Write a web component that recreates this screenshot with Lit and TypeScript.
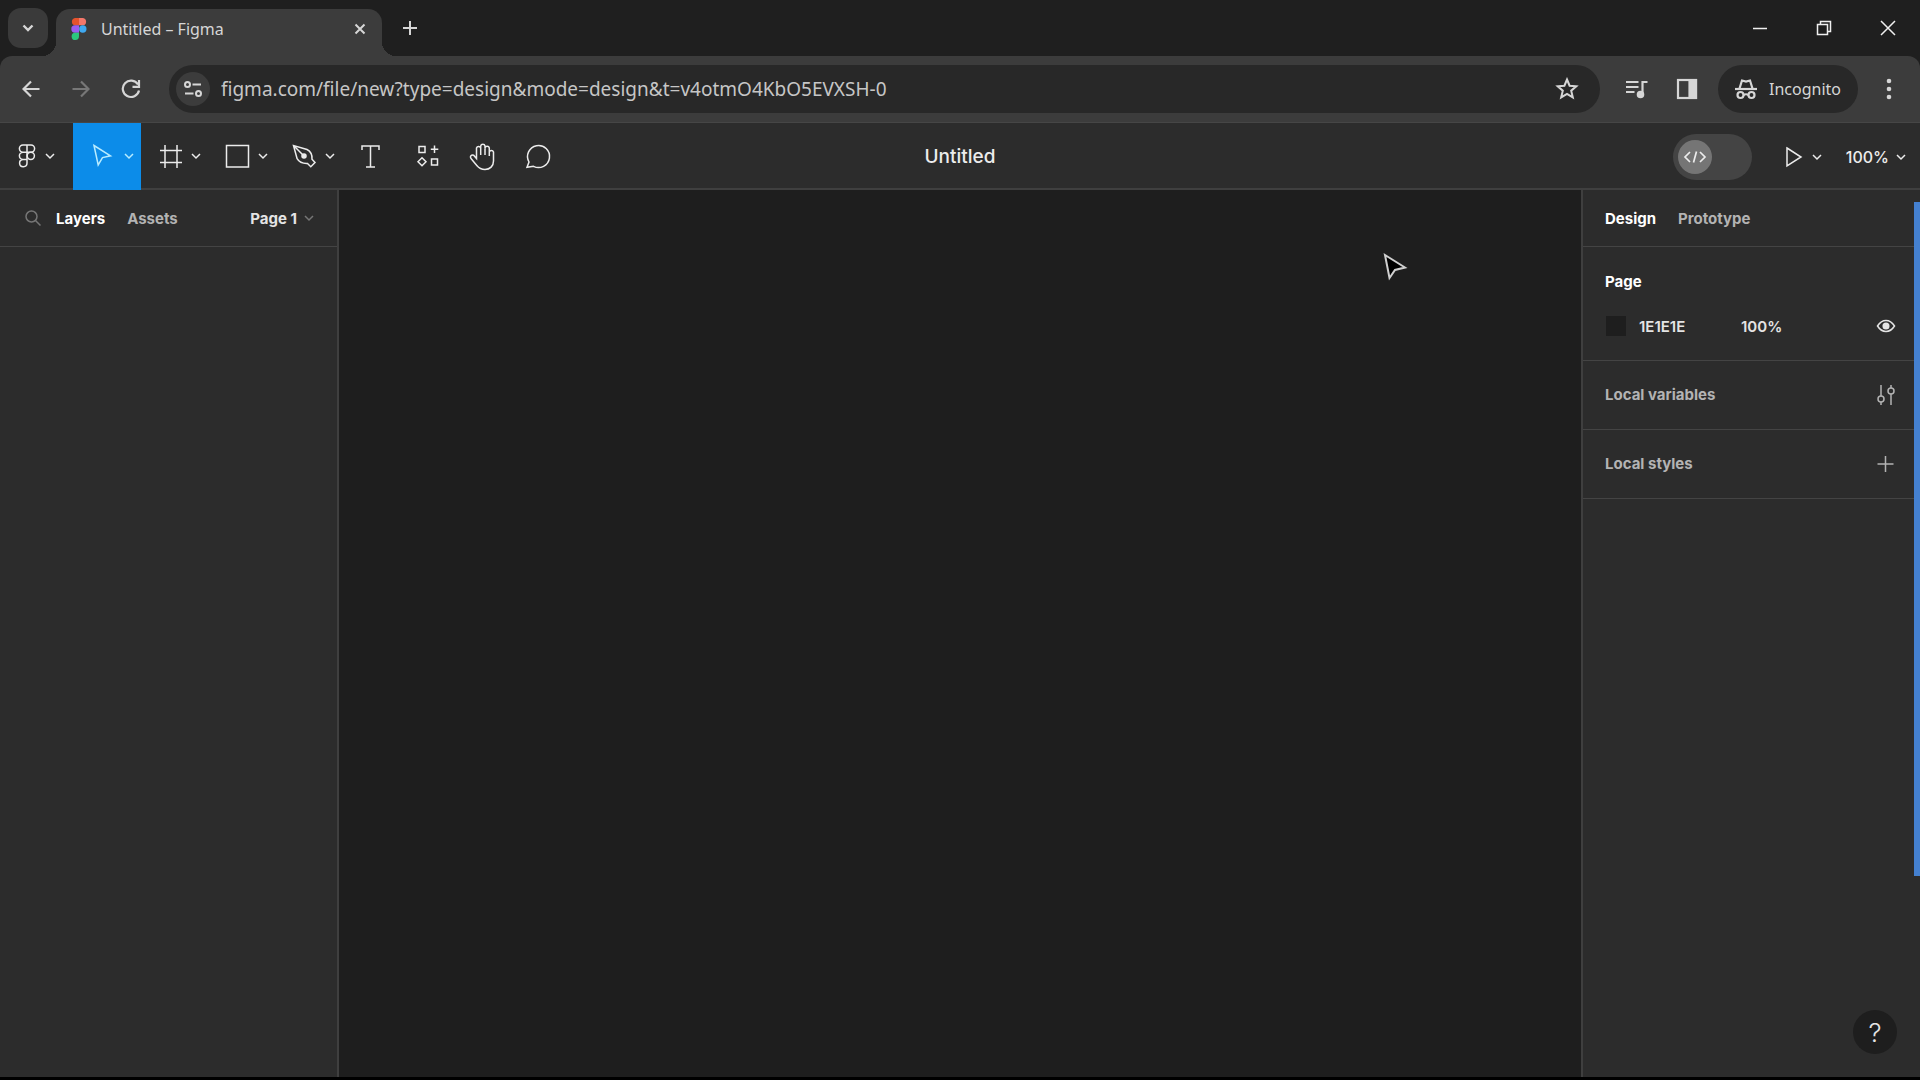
import { LitElement, html, svg, css } from "lit";
import { customElement } from "lit/decorators.js";

const shared = css`
  * {
    box-sizing: border-box;
  }
  button,
  input {
    margin: 0;
    padding: 0;
    border: 0;
    background: none;
    color: inherit;
    font: inherit;
    outline: none;
  }
  button {
    display: flex;
    align-items: center;
    justify-content: center;
    white-space: nowrap;
  }
  svg {
    display: block;
    flex: none;
    fill: none;
    stroke: currentColor;
  }
`;

const icon = (w: number, h: number, body: unknown, sw = 1.5) =>
  html`<svg width=${w} height=${h} viewBox="0 0 ${w} ${h}" stroke-width=${sw} aria-hidden="true">${body}</svg>`;

const chevron = () => icon(10, 8, svg`<path d="M1 2l4 4 4-4"/>`);

const figmaOutline = icon(18, 26, svg`
  <path d="M9 2H5a3.6 3.6 0 0 0 0 7.2h4zM9 2h4a3.6 3.6 0 0 1 0 7.2H9zM9 9.200H5a3.600 3.600 0 0 0 0 7.200h4zM5 16.400a3.700 3.700 0 1 0 4 3.700v-3.700z"/>
  <circle cx="12.800" cy="12.800" r="3.600"/>`);

const tools = {
  move: svg`<path d="M7 5.500l16.500 10.300-8 1.800-4.300 7.300z"/>`,
  frame: svg`<path d="M11 5v23M23 5v23M6 10.500h22M6 22.500h22"/>`,
  rect: svg`<rect x="5.500" y="5.500" width="22" height="21.500"/>`,
  pen: svg`<path d="M5.500 5.500l3.600 13.200c2 3.400 6 5 10.400 4.800l3.300 3.300 4.200-4.200-3-3.300c.4-4.500-1.600-8-5-9.800zM5.500 5.500l9.500 9.500"/><circle cx="16" cy="16" r="2" fill="currentColor"/>`,
  text: svg`<path d="M8 10V6h17v4M16.500 6v21M12 27h9"/>`,
  resources: svg`<path d="M9 6.500h6v6H9zM21.500 19h6v6h-6zM24.500 5.500v7.500M20.800 9.300h7.500M12 17.800l4 4-4 4-4-4z"/>`,
  hand: svg`<path d="M10.500 18.500V8a2.200 2.200 0 0 1 4.200 0V6a2.200 2.200 0 0 1 4.300 0v2a2.200 2.200 0 0 1 4.300 0v4a2.200 2.200 0 0 1 4.200 0v9c0 5-3.500 8.500-8.500 8.500-3.600 0-6-1.300-8.200-4l-5.800-7c-1.600-2 .5-4.300 2.600-3.300zM14.700 7.500V15M19 7.500V15M23.300 9v7"/>`,
  comment: svg`<path d="M5 27.300l2-5.300a11 11 0 1 1 4.500 4.300z"/>`,
};

@customElement("browser-chrome")
export class BrowserChrome extends LitElement {
  static styles = [
    shared,
    css`
      :host {
        display: block;
        background: #1f1f1f;
        color: #d6d6d6;
        font-family: "Noto Sans", "Open Sans", sans-serif;
        font-size: 16px;
      }
      .strip {
        display: flex;
        align-items: center;
        height: 56px;
        padding-left: 8px;
      }
      .search-tabs {
        width: 40px;
        height: 40px;
        border-radius: 13px;
        background: #3a3a3a;
      }
      .tab {
        position: relative;
        align-self: flex-end;
        display: flex;
        align-items: center;
        width: 326px;
        height: 47px;
        margin-left: 8px;
        padding: 0 16px 8px 15px;
        border-radius: 14px 14px 0 0;
        background: #3c3c3c;
      }
      .tab::before,
      .tab::after {
        content: "";
        position: absolute;
        bottom: 0;
        width: 14px;
        height: 14px;
      }
      .tab::before {
        right: 100%;
        background: radial-gradient(circle at 0 0, transparent 14px, #3c3c3c 14px);
      }
      .tab::after {
        left: 100%;
        background: radial-gradient(circle at 100% 0, transparent 14px, #3c3c3c 14px);
      }
      .logo {
        stroke: none;
      }
      .tab-title {
        flex: 1;
        margin-left: 14px;
        line-height: 24px;
      }
      .new-tab {
        width: 40px;
        height: 40px;
        margin-left: 8px;
      }
      .window {
        display: flex;
        margin-left: auto;
        color: #f0f0f0;
      }
      .window button {
        width: 64px;
        height: 48px;
      }
      .bar {
        display: flex;
        align-items: center;
        height: 67px;
        padding: 0 8px;
        border-bottom: 1px solid #464646;
        border-radius: 12px 12px 0 0;
        background: #3c3c3c;
      }
      .nav {
        width: 46px;
        height: 46px;
      }
      .nav + .nav {
        margin-left: 4px;
      }
      .off {
        color: #777777;
      }
      .address {
        flex: 1;
        display: flex;
        align-items: center;
        height: 48px;
        margin: 0 12px 0 15px;
        padding: 0 21px 0 7px;
        border-radius: 24px;
        background: #282828;
      }
      .site {
        width: 34px;
        height: 34px;
        border-radius: 50%;
        background: #3c3c3c;
      }
      .url {
        flex: 1;
        min-width: 0;
        height: 40px;
        margin-left: 11px;
        color: #c6c6c6;
        font-size: 19px;
      }
      .action {
        width: 50px;
        height: 46px;
      }
      .incognito {
        width: 140px;
        height: 48px;
        gap: 12px;
        margin-left: 6px;
        border-radius: 24px;
        background: #282828;
      }
      .more {
        width: 46px;
        height: 46px;
        margin-left: 8px;
      }
      .dots {
        fill: currentColor;
        stroke: none;
      }
    `,
  ];

  render() {
    return html`
      <div class="strip">
        <button class="search-tabs" aria-label="Search tabs">${icon(12, 10, svg`<path d="M1.500 2.500l4.500 4.500 4.500-4.500"/>`, 2.4)}</button>
        <div class="tab">
          <svg class="logo" width="16" height="24" viewBox="0 0 16 24" aria-hidden="true">
            <path fill="#e5532d" d="M8 1H4a3.700 3.700 0 0 0 0 7.300h4z" />
            <path fill="#f2776a" d="M8 1h4a3.700 3.700 0 0 1 0 7.300H8z" />
            <path fill="#9a5cf0" d="M8 8.300H4a3.700 3.700 0 0 0 0 7.400h4z" />
            <circle fill="#3fa9f0" cx="11.800" cy="12" r="3.700" />
            <path fill="#2bc77d" d="M8 15.700H4.200A3.700 3.700 0 1 0 8 19.300z" />
          </svg>
          <span class="tab-title">Untitled – Figma</span>
          <button aria-label="Close tab">${icon(12, 12, svg`<path d="M1.500 1.500l9 9M10.500 1.500l-9 9"/>`, 2)}</button>
        </div>
        <button class="new-tab" aria-label="New tab">${icon(16, 16, svg`<path d="M8 1v14M1 8h14"/>`, 2)}</button>
        <div class="window">
          <button aria-label="Minimize">${icon(16, 16, svg`<path d="M1 8.500h14"/>`, 1.5)}</button>
          <button aria-label="Restore">${icon(16, 16, svg`<path d="M1.500 4.500h10v10h-10zM4.500 4.500v-3h10v10h-3"/>`, 1.5)}</button>
          <button aria-label="Close">${icon(16, 16, svg`<path d="M1 1l14 14M15 1L1 15"/>`, 1.5)}</button>
        </div>
      </div>
      <div class="bar">
        <button class="nav" aria-label="Back">${icon(18, 18, svg`<path d="M17.500 9H2M9 1.500L1.500 9 9 16.500"/>`, 2.2)}</button>
        <button class="nav off" aria-label="Forward">${icon(18, 18, svg`<path d="M.5 9H16M9 1.500L16.500 9 9 16.500"/>`, 2.2)}</button>
        <button class="nav" aria-label="Reload">${icon(20, 20, svg`<path d="M17 5.500A8.200 8.200 0 1 0 18 11.500M18 1v6.800h-6.500"/>`, 2.2)}</button>
        <div class="address">
          <button class="site" aria-label="View site information">
            ${icon(20, 18, svg`<circle cx="4.500" cy="4.500" r="2.500"/><path d="M9.500 4.500H18M2 13.500h8.500"/><circle cx="15.500" cy="13.500" r="2.500"/>`, 2)}
          </button>
          <input class="url" type="text" aria-label="Address" value="figma.com/file/new?type=design&amp;mode=design&amp;t=v4otmO4KbO5EVXSH-0" />
          <button aria-label="Bookmark this tab">
            ${icon(24, 24, svg`<path d="M12 2.500l2.600 6.200 6.700.6-5.100 4.400 1.600 6.600-5.800-3.500-5.800 3.500 1.600-6.600-5.100-4.400 6.700-.6z"/>`, 2)}
          </button>
        </div>
        <button class="action" aria-label="Media control">
          ${icon(24, 20, svg`<path d="M1 3h12.500M1 8h12.500M1 13h8.500M17.500 16V3h5"/><circle cx="15.500" cy="15.500" r="2.700" fill="currentColor"/>`, 2.2)}
        </button>
        <button class="action" aria-label="Side panel">
          ${icon(22, 22, svg`<rect x="2" y="2" width="18" height="18"/><path fill="currentColor" d="M13.500 2H20v18h-6.500z"/>`, 2.2)}
        </button>
        <button class="incognito">
          ${icon(22, 22, svg`<path d="M0 11h22"/><path d="M4.500 10.500L7 2.500l4 1 4-1 2.500 8"/><circle cx="5.500" cy="17" r="3"/><circle cx="16.500" cy="17" r="3"/><path d="M8.500 17q2.500-1.500 5 0"/>`, 2.2)}
          Incognito
        </button>
        <button class="more" aria-label="More">
          <svg class="dots" width="6" height="22" viewBox="0 0 6 22" aria-hidden="true">
            <circle cx="3" cy="3" r="2.300" /><circle cx="3" cy="11" r="2.300" /><circle cx="3" cy="19" r="2.300" />
          </svg>
        </button>
      </div>
    `;
  }
}

@customElement("editor-toolbar")
export class EditorToolbar extends LitElement {
  static styles = [
    shared,
    css`
      :host {
        display: grid;
        grid-template-columns: 1fr auto 1fr;
        align-items: center;
        height: 67px;
        border-bottom: 2px solid #3f3f3f;
        background: #2c2c2c;
        color: #ececec;
        font-family: Inter, "Liberation Sans", sans-serif;
        font-size: 16px;
      }
      .tools,
      .right {
        display: flex;
        height: 67px;
      }
      .right {
        align-items: center;
        justify-content: flex-end;
        padding-right: 14px;
      }
      .menu,
      .tool {
        gap: 5px;
        height: 67px;
        padding-bottom: 2px;
      }
      .menu {
        width: 73px;
        gap: 9px;
      }
      .tool {
        width: 67px;
        padding-left: 6px;
      }
      .single {
        width: 56px;
        padding-left: 0;
      }
      .active {
        width: 68px;
        background: #0c8ce9;
        color: #b8ecff;
      }
      .title {
        height: 67px;
        font-size: 19px;
        font-weight: 500;
      }
      .dev {
        position: relative;
        display: flex;
        align-items: center;
        margin-right: 33px;
      }
      .dev input {
        appearance: none;
        width: 79px;
        height: 46px;
        border-radius: 23px;
        background: #444444;
      }
      .knob {
        position: absolute;
        left: 5px;
        display: grid;
        place-items: center;
        width: 34px;
        height: 34px;
        border-radius: 50%;
        background: #757575;
        pointer-events: none;
      }
      .play {
        gap: 9px;
        margin-right: 24px;
      }
      .zoom {
        gap: 7px;
        font-weight: 500;
      }
    `,
  ];

  private drop(name: string, body: unknown, extra = "") {
    return html`<button class="tool ${extra}" aria-label=${name}>${icon(32, 32, body)}${chevron()}</button>`;
  }

  private single(name: string, body: unknown) {
    return html`<button class="tool single" aria-label=${name}>${icon(32, 32, body)}</button>`;
  }

  render() {
    return html`
      <div class="tools">
        <button class="menu" aria-label="Main menu">${figmaOutline}${chevron()}</button>
        ${this.drop("Move", tools.move, "active")} ${this.drop("Frame", tools.frame)}
        ${this.drop("Rectangle", tools.rect)} ${this.drop("Pen", tools.pen)}
        ${this.single("Text", tools.text)} ${this.single("Resources", tools.resources)}
        ${this.single("Hand", tools.hand)} ${this.single("Comment", tools.comment)}
      </div>
      <button class="title">Untitled</button>
      <div class="right">
        <label class="dev">
          <input type="checkbox" role="switch" aria-label="Dev Mode" />
          <span class="knob">${icon(24, 16, svg`<path d="M7 3L2 8l5 5M17 3l5 5-5 5M13.500 2.500l-3 11"/>`, 1.7)}</span>
        </label>
        <button class="play" aria-label="Present">${icon(18, 22, svg`<path d="M2 2l14 9-14 9z"/>`)}${chevron()}</button>
        <button class="zoom">100%${chevron()}</button>
      </div>
    `;
  }
}

@customElement("layers-panel")
export class LayersPanel extends LitElement {
  static styles = [
    shared,
    css`
      :host {
        display: block;
        border-right: 2px solid #3f3f3f;
        background: #2c2c2c;
        color: #b3b3b3;
        font-weight: 700;
      }
      .head {
        display: flex;
        align-items: center;
        height: 57px;
        padding: 0 23px 0 24px;
        border-bottom: 1px solid #444444;
      }
      .search {
        margin-right: 14px;
        color: #767676;
      }
      .on {
        margin-right: 22px;
        color: #ffffff;
      }
      .page {
        gap: 7px;
        margin-left: auto;
        color: #e4e4e4;
      }
      .page svg {
        color: #767676;
      }
    `,
  ];

  render() {
    return html`
      <div class="head">
        <button class="search" aria-label="Search">${icon(18, 18, svg`<circle cx="7.500" cy="7.500" r="5.500"/><path d="M11.500 11.500l5 5"/>`)}</button>
        <button class="on">Layers</button>
        <button>Assets</button>
        <button class="page">Page 1${chevron()}</button>
      </div>
    `;
  }
}

@customElement("design-panel")
export class DesignPanel extends LitElement {
  static styles = [
    shared,
    css`
      :host {
        display: block;
        border-left: 2px solid #3f3f3f;
        background: #2c2c2c;
        color: #b3b3b3;
        font-weight: 700;
      }
      .row {
        display: flex;
        align-items: center;
        justify-content: space-between;
        height: 69px;
        padding: 0 18px 0 22px;
        border-bottom: 1px solid #444444;
      }
      .tabs {
        justify-content: flex-start;
        gap: 22px;
        height: 57px;
      }
      .on,
      .heading {
        color: #ffffff;
      }
      .group {
        padding: 24px 18px 22px 22px;
        border-bottom: 1px solid #444444;
      }
      h2 {
        margin: 0;
        font-size: inherit;
        font-weight: inherit;
        line-height: 22px;
      }
      .fill {
        display: flex;
        align-items: center;
        height: 24px;
        margin-top: 21px;
        color: #e4e4e4;
        font-weight: 600;
      }
      .swatch {
        width: 20px;
        height: 20px;
        margin: 0 13px 0 1px;
        background: #1e1e1e;
      }
      .hex {
        width: 102px;
      }
      .alpha {
        width: 60px;
      }
      .eye {
        margin-left: auto;
      }
    `,
  ];

  render() {
    return html`
      <div class="row tabs">
        <button class="on">Design</button>
        <button>Prototype</button>
      </div>
      <div class="group">
        <h2 class="heading">Page</h2>
        <div class="fill">
          <button class="swatch" aria-label="Page color"></button>
          <input class="hex" type="text" aria-label="Page color hex" value="1E1E1E" />
          <input class="alpha" type="text" aria-label="Page color opacity" value="100%" />
          <button class="eye" aria-label="Toggle visibility">
            ${icon(20, 16, svg`<path d="M1.500 8Q5 2.500 10 2.500T18.500 8Q15 13.500 10 13.500T1.500 8z"/><circle cx="10" cy="8" r="2.800" fill="currentColor"/>`)}
          </button>
        </div>
      </div>
      <div class="row">
        <h2>Local variables</h2>
        <button aria-label="Open variables">${icon(20, 22, svg`<path d="M5 1v11M5 18v3M15 1v3M15 10v11"/><circle cx="5" cy="15" r="3"/><circle cx="15" cy="7" r="3"/>`)}</button>
      </div>
      <div class="row">
        <h2>Local styles</h2>
        <button aria-label="Create style">${icon(20, 18, svg`<path d="M9.500 1v16M1.500 9h16"/>`)}</button>
      </div>
    `;
  }
}

@customElement("app-root")
export class AppRoot extends LitElement {
  static styles = [
    shared,
    css`
      :host {
        display: flex;
        flex-direction: column;
        min-height: 100vh;
        box-sizing: border-box;
        border-bottom: 3px solid #000000;
        background: #2c2c2c;
        font-family: Inter, "Liberation Sans", sans-serif;
        font-size: 15px;
      }
      .work {
        position: relative;
        flex: 1;
        display: grid;
        grid-template-columns: 339px 1fr 333px 6px;
      }
      .canvas {
        position: relative;
        background: #1e1e1e;
      }
      .pointer {
        position: absolute;
        top: 62px;
        left: 1043px;
        fill: #000000;
        color: #d0d0d0;
      }
      .gutter {
        padding-top: 12px;
      }
      .thumb {
        height: 77%;
        background: #4480d0;
      }
      .help {
        position: absolute;
        right: 23px;
        bottom: 23px;
        width: 44px;
        height: 44px;
        border-radius: 50%;
        background: #1e1e1e;
        color: #e4e4e4;
        font-size: 26px;
        font-weight: 300;
      }
    `,
  ];

  render() {
    return html`
      <browser-chrome></browser-chrome>
      <editor-toolbar></editor-toolbar>
      <div class="work">
        <layers-panel></layers-panel>
        <main class="canvas">
          <svg class="pointer" width="26" height="30" viewBox="0 0 26 30" stroke-width="2" aria-hidden="true">
            <path d="M3 3l20 12.500-10 2.500-5.500 8z" />
          </svg>
        </main>
        <design-panel></design-panel>
        <div class="gutter"><div class="thumb"></div></div>
        <button class="help" aria-label="Help and resources">?</button>
      </div>
    `;
  }
}
